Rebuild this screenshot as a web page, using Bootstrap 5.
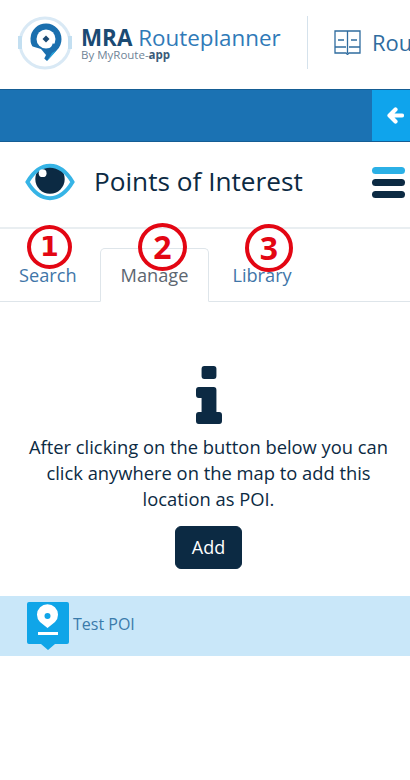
<!DOCTYPE html>
<html lang="en">
<head>
    <meta charset="UTF-8">
    <meta name="viewport" content="width=device-width, initial-scale=1.0">
    <title>MRA Routeplanner</title>
    <link href="https://cdn.jsdelivr.net/npm/bootstrap@5.3.0/dist/css/bootstrap.min.css" rel="stylesheet">
    <style>
        html, body {
            height: 780px;
            overflow: hidden;
        }
        body {
            font-family: "Open Sans", "Noto Sans", sans-serif;
            color: #0c2a43;
            background: #fff;
        }
        .top-head {
            height: 89px;
            padding-left: 16px;
            padding-bottom: 4px;
            overflow: hidden;
        }
        .brand-text {
            width: 200px;
            margin-left: 5px;
            margin-top: -1px;
        }
        .brand-name {
            font-size: 22.4px;
            line-height: 24px;
            color: #2f7ab8;
            white-space: nowrap;
        }
        .brand-name b {
            color: #1b4a73;
            font-weight: 700;
        }
        .brand-sub {
            font-size: 11.5px;
            line-height: 9px;
            color: #6f8497;
            white-space: nowrap;
        }
        .brand-sub b {
            color: #3a5a78;
        }
        .head-divider {
            width: 1px;
            height: 53px;
            background: #d5e2ec;
            margin-left: 26px;
            margin-right: 26px;
        }
        .head-link {
            font-size: 22px;
            color: #2f6c9f;
            white-space: nowrap;
            margin-left: 3px;
        }
        .blue-bar {
            height: 53px;
            background: #1b72b3;
            border-top: 1px solid #155d94;
            border-bottom: 1px solid #155d94;
        }
        .back-btn {
            width: 38px;
            background: #0fa4ec;
            border: 0;
            padding: 0 0 0 8px;
        }
        .title-row {
            height: 87px;
            padding: 0 5px 5px 25px;
            border-bottom: 2px solid #e9eef1;
        }
        .title-row h1 {
            font-size: 26.2px;
            font-weight: 400;
            margin: 0 0 0 19px;
            color: #0c2a43;
        }
        .burger {
            width: 33px;
            display: flex;
            flex-direction: column;
            gap: 5px;
        }
        .burger span {
            height: 7px;
            border-radius: 4px;
            background: #0c2a43;
        }
        .burger span:first-child {
            background: #2bb0e6;
        }
        .tab-wrap {
            position: relative;
            padding-top: 19px;
        }
        .tab-wrap .nav-tabs {
            padding-left: 1px;
            border-bottom-color: #dee5ea;
        }
        .tab-wrap .nav-link {
            font-size: 18.2px;
            line-height: 26px;
            padding: 13px 20px 13px;
            color: #3f76a8;
            border-radius: 5px 5px 0 0;
        }
        .tab-wrap .nav-item:first-child .nav-link {
            padding-left: 17px;
            padding-right: 22px;
        }
        .tab-wrap .nav-link.active {
            color: #5c6670;
            border-color: #dee5ea #dee5ea #fff;
        }
        .tab-wrap .nav-item:last-child .nav-link {
            padding-left: 22px;
        }
        .num-mark {
            position: absolute;
            border: 4px solid #e30613;
            border-radius: 50%;
            color: #e30613;
            font-weight: 700;
            font-size: 32px;
            line-height: 40px;
            text-align: center;
        }
        .mark-one {
            left: 27px;
            top: -4px;
            width: 45px;
            height: 44px;
            line-height: 36px;
            font-family: "DejaVu Sans", sans-serif;
            font-size: 27px;
        }
        .mark-two { left: 138px; top: -6px; width: 49px; height: 48px; }
        .mark-three { left: 245px; top: -5px; width: 48px; height: 48px; }
        .info-box {
            padding: 64px 0 0 7px;
        }
        .info-box p {
            font-size: 18.35px;
            line-height: 26px;
            margin: 10px 20px 14px;
            color: #0c2a43;
        }
        .add-btn {
            background: #0c2a43;
            border-color: #0c2a43;
            color: #fff;
            font-size: 18px;
            line-height: 27px;
            padding: 7px 15px;
            width: 67px;
            border-radius: 6px;
        }
        .poi-row {
            height: 60px;
            margin-top: 27px;
            padding-left: 27px;
            background: #c9e7f9;
            color: #3a7bab;
            font-size: 16px;
        }
        .poi-row svg {
            margin-right: 4px;
        }
        .poi-row span {
            padding-bottom: 4px;
        }
    </style>
</head>
<body>
    <div class="top-head d-flex align-items-center">
        <!-- logo -->
        <svg width="60" height="60" viewBox="0 0 60 60" class="flex-shrink-0">
            <circle cx="29" cy="30" r="25" fill="none" stroke="#d9e9f5" stroke-width="3"/>
            <path d="M4 23v13M54 23v13" stroke="#c3dff1" stroke-width="4"/>
            <path d="M31 48 L18.500 36.500 A15.500 15.500 0 1 1 41 37 Z" fill="#1a6fae"/>
            <path d="M31 48 L36 40 L41 37 Z" fill="#2aa6dd"/>
            <path d="M15 33 L25 36 L30 42 L27 48 Z" fill="#fff"/>
            <circle cx="30" cy="26" r="9.500" fill="#fff"/>
            <path d="M29.500 47 L37 30 L40 34 Z" fill="#1a6fae"/>
            <path d="M30 22.500l3.500 3.500-3.500 3.500-3.500-3.500z" fill="#1b4a73"/>
        </svg>
        <div class="brand-text flex-shrink-0">
            <div class="brand-name"><b>MRA</b> Routeplanner</div>
            <div class="brand-sub">By MyRoute-<b>app</b></div>
        </div>
        <div class="head-divider flex-shrink-0"></div>
        <svg width="27" height="25" viewBox="0 0 27 25" class="flex-shrink-0 me-2" fill="none" stroke="#2f6c9f" stroke-width="1.3">
            <path d="M1 1h25v22H15l-1.500 1.500L12 23H1z"/>
            <path d="M13.500 1v22M4 10h6M17 10h6M1 17h11M15 17h11"/>
        </svg>
        <span class="head-link">Routes</span>
    </div>

    <div class="blue-bar d-flex justify-content-end">
        <button class="back-btn d-flex align-items-center justify-content-center" type="button" aria-label="Back">
            <svg width="17" height="17" viewBox="0 0 17 17">
                <path d="M8.500 2.500 2.500 8.500l6 6M3 8.500H15" fill="none" stroke="#fff" stroke-width="4.200" stroke-linejoin="round" stroke-linecap="round"/>
            </svg>
        </button>
    </div>

    <div class="title-row d-flex align-items-center justify-content-between">
        <div class="d-flex align-items-center">
            <svg width="50" height="38" viewBox="0 0 51 38" class="flex-shrink-0">
                <circle cx="25.500" cy="16" r="15" fill="#0c2a43"/>
                <path d="M2.500 19C9 8 17 2.500 25.500 2.500S42 8 48.500 19C42 30 34 35.500 25.500 35.500S9 30 2.500 19Z" fill="none" stroke="#36b4e6" stroke-width="4"/>
                <circle cx="18" cy="10" r="4" fill="#fff"/>
            </svg>
            <h1>Points of Interest</h1>
        </div>
        <div class="burger"><span></span><span></span><span></span></div>
    </div>

    <div class="tab-wrap">
        <ul class="nav nav-tabs">
            <li class="nav-item"><a class="nav-link" href="#">Search</a></li>
            <li class="nav-item"><a class="nav-link active" href="#">Manage</a></li>
            <li class="nav-item"><a class="nav-link" href="#">Library</a></li>
        </ul>
        <span class="num-mark mark-one">1</span>
        <span class="num-mark mark-two">2</span>
        <span class="num-mark mark-three">3</span>
    </div>

    <div class="info-box text-center">
        <svg width="26" height="58" viewBox="0 0 28 58" preserveAspectRatio="none" class="d-block mx-auto">
            <rect x="6" y="0" width="16" height="13" rx="3" fill="#0c2a43"/>
            <path d="M3 21h16a3 3 0 0 1 3 3v22h3a3 3 0 0 1 3 3v6a3 3 0 0 1-3 3H3a3 3 0 0 1-3-3v-6a3 3 0 0 1 3-3h3V32H3a3 3 0 0 1-3-3v-5a3 3 0 0 1 3-3z" fill="#0c2a43"/>
        </svg>
        <p>After clicking on the button below you can click anywhere on the map to add this location as POI.</p>
        <button class="btn add-btn" type="button">Add</button>
    </div>

    <div class="poi-row d-flex align-items-center">
        <svg width="42" height="48" viewBox="0 0 42 48" class="flex-shrink-0">
            <path d="M2 0h38a2 2 0 0 1 2 2v38a2 2 0 0 1-2 2H28l-7 6-7-6H2a2 2 0 0 1-2-2V2a2 2 0 0 1 2-2z" fill="#10a5e8"/>
            <path d="M20.500 26 L13 20 A10.500 10.500 0 1 1 28 20 Z" fill="#fff"/>
            <circle cx="20.500" cy="14" r="3" fill="#10a5e8"/>
            <rect x="11" y="30" width="20" height="3" fill="#fff"/>
        </svg>
        <span>Test POI</span>
    </div>

    <script src="https://cdn.jsdelivr.net/npm/bootstrap@5.3.0/dist/js/bootstrap.bundle.min.js"></script>
</body>
</html>
